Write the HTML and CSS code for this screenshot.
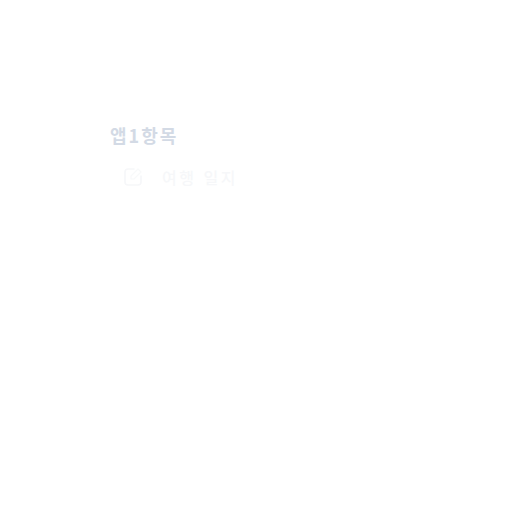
FILE: index.html
```html
<!DOCTYPE html>
<html lang="ko">
<head>
<meta charset="utf-8">
<link rel="stylesheet" href="styles.css">
</head>
<body>
<div class="panel">
  <h2 class="title">앱1항목</h2>
  <div class="item">
    <svg class="icon" width="20" height="20" viewBox="0 0 20 20"><path d="M11 2H5a3 3 0 0 0-3 3v10a3 3 0 0 0 3 3h10a3 3 0 0 0 3-3V9" fill="none" stroke="#f6f7f9" stroke-width="1.6" stroke-linecap="round"/><path d="M15 2l3 3-7 7H8V9z" fill="none" stroke="#f8f9fa" stroke-width="1.2" stroke-linejoin="round"/></svg>
    <span class="label">여행 일지</span>
  </div>
</div>
</body>
</html>
```
FILE: styles.css
```css
html, body { margin: 0; padding: 0; background: #ffffff; }
body { font-family: "Noto Sans CJK KR", "Noto Sans", sans-serif; width: 512px; height: 512px; }
.panel { padding: 122px 0 0 110px; }
.title { margin: 0; font-size: 18px; font-weight: 700; color: #d3dae5; line-height: 26px; letter-spacing: 2px; }
.item { display: flex; align-items: center; gap: 19px; margin: 17px 0 0 13px; height: 24px; }
.icon { display: block; }
.label { font-size: 16px; color: #f6f7f9; font-weight: 500; letter-spacing: 2.5px; }
```
